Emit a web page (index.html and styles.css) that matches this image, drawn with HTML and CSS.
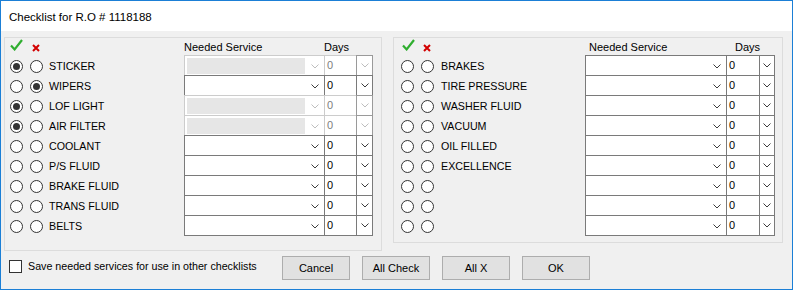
FILE: index.html
```html
<!DOCTYPE html>
<html>
<head>
<meta charset="utf-8">
<link rel="stylesheet" href="styles.css">
</head>
<body>
<div class="window">
  <div class="titlebar">Checklist for R.O # 1118188</div>
  <div class="content">
    <div class="group left">
      <div class="head">
        <span class="hc1"><svg width="13" height="12" viewBox="0 0 13 12"><path d="M1 6.5 L4.6 10.4 L12 1" fill="none" stroke="#2fae2f" stroke-width="2.2"/></svg></span>
        <span class="hc2"><svg width="8" height="8" viewBox="0 0 8 8"><path d="M1 1 L7 7 M7 1 L1 7" fill="none" stroke="#d20000" stroke-width="2"/></svg></span>
        <span class="hlbl"></span>
        <span class="hsvc">Needed Service</span>
        <span class="hdays">Days</span>
      </div>
      <div class="row"><span class="radio on"></span><span class="radio"></span><span class="lbl">STICKER</span><div class="combo dis"><div class="field"></div><span class="arr"><svg width="8" height="5" viewBox="0 0 8 5"><path d="M0.5 0.5 L4 4 L7.5 0.5" fill="none" stroke-width="1"/></svg></span></div><div class="days dis"><span class="num">0</span><span class="btn"><svg width="8" height="5" viewBox="0 0 8 5"><path d="M0.5 0.5 L4 4 L7.5 0.5" fill="none" stroke-width="1"/></svg></span></div></div>
      <div class="row"><span class="radio"></span><span class="radio on"></span><span class="lbl">WIPERS</span><div class="combo"><div class="field"></div><span class="arr"><svg width="8" height="5" viewBox="0 0 8 5"><path d="M0.5 0.5 L4 4 L7.5 0.5" fill="none" stroke-width="1"/></svg></span></div><div class="days"><span class="num">0</span><span class="btn"><svg width="8" height="5" viewBox="0 0 8 5"><path d="M0.5 0.5 L4 4 L7.5 0.5" fill="none" stroke-width="1"/></svg></span></div></div>
      <div class="row"><span class="radio on"></span><span class="radio"></span><span class="lbl">LOF LIGHT</span><div class="combo dis"><div class="field"></div><span class="arr"><svg width="8" height="5" viewBox="0 0 8 5"><path d="M0.5 0.5 L4 4 L7.5 0.5" fill="none" stroke-width="1"/></svg></span></div><div class="days dis"><span class="num">0</span><span class="btn"><svg width="8" height="5" viewBox="0 0 8 5"><path d="M0.5 0.5 L4 4 L7.5 0.5" fill="none" stroke-width="1"/></svg></span></div></div>
      <div class="row"><span class="radio on"></span><span class="radio"></span><span class="lbl">AIR FILTER</span><div class="combo dis"><div class="field"></div><span class="arr"><svg width="8" height="5" viewBox="0 0 8 5"><path d="M0.5 0.5 L4 4 L7.5 0.5" fill="none" stroke-width="1"/></svg></span></div><div class="days dis"><span class="num">0</span><span class="btn"><svg width="8" height="5" viewBox="0 0 8 5"><path d="M0.5 0.5 L4 4 L7.5 0.5" fill="none" stroke-width="1"/></svg></span></div></div>
      <div class="row"><span class="radio"></span><span class="radio"></span><span class="lbl">COOLANT</span><div class="combo"><div class="field"></div><span class="arr"><svg width="8" height="5" viewBox="0 0 8 5"><path d="M0.5 0.5 L4 4 L7.5 0.5" fill="none" stroke-width="1"/></svg></span></div><div class="days"><span class="num">0</span><span class="btn"><svg width="8" height="5" viewBox="0 0 8 5"><path d="M0.5 0.5 L4 4 L7.5 0.5" fill="none" stroke-width="1"/></svg></span></div></div>
      <div class="row"><span class="radio"></span><span class="radio"></span><span class="lbl">P/S FLUID</span><div class="combo"><div class="field"></div><span class="arr"><svg width="8" height="5" viewBox="0 0 8 5"><path d="M0.5 0.5 L4 4 L7.5 0.5" fill="none" stroke-width="1"/></svg></span></div><div class="days"><span class="num">0</span><span class="btn"><svg width="8" height="5" viewBox="0 0 8 5"><path d="M0.5 0.5 L4 4 L7.5 0.5" fill="none" stroke-width="1"/></svg></span></div></div>
      <div class="row"><span class="radio"></span><span class="radio"></span><span class="lbl">BRAKE FLUID</span><div class="combo"><div class="field"></div><span class="arr"><svg width="8" height="5" viewBox="0 0 8 5"><path d="M0.5 0.5 L4 4 L7.5 0.5" fill="none" stroke-width="1"/></svg></span></div><div class="days"><span class="num">0</span><span class="btn"><svg width="8" height="5" viewBox="0 0 8 5"><path d="M0.5 0.5 L4 4 L7.5 0.5" fill="none" stroke-width="1"/></svg></span></div></div>
      <div class="row"><span class="radio"></span><span class="radio"></span><span class="lbl">TRANS FLUID</span><div class="combo"><div class="field"></div><span class="arr"><svg width="8" height="5" viewBox="0 0 8 5"><path d="M0.5 0.5 L4 4 L7.5 0.5" fill="none" stroke-width="1"/></svg></span></div><div class="days"><span class="num">0</span><span class="btn"><svg width="8" height="5" viewBox="0 0 8 5"><path d="M0.5 0.5 L4 4 L7.5 0.5" fill="none" stroke-width="1"/></svg></span></div></div>
      <div class="row"><span class="radio"></span><span class="radio"></span><span class="lbl">BELTS</span><div class="combo"><div class="field"></div><span class="arr"><svg width="8" height="5" viewBox="0 0 8 5"><path d="M0.5 0.5 L4 4 L7.5 0.5" fill="none" stroke-width="1"/></svg></span></div><div class="days"><span class="num">0</span><span class="btn"><svg width="8" height="5" viewBox="0 0 8 5"><path d="M0.5 0.5 L4 4 L7.5 0.5" fill="none" stroke-width="1"/></svg></span></div></div>
    </div>

    <div class="group right">
      <div class="head">
        <span class="hc1"><svg width="13" height="12" viewBox="0 0 13 12"><path d="M1 6.5 L4.6 10.4 L12 1" fill="none" stroke="#2fae2f" stroke-width="2.2"/></svg></span>
        <span class="hc2"><svg width="8" height="8" viewBox="0 0 8 8"><path d="M1 1 L7 7 M7 1 L1 7" fill="none" stroke="#d20000" stroke-width="2"/></svg></span>
        <span class="hlbl"></span>
        <span class="hsvc">Needed Service</span>
        <span class="hdays">Days</span>
      </div>
      <div class="row"><span class="radio"></span><span class="radio"></span><span class="lbl">BRAKES</span><div class="combo"><div class="field"></div><span class="arr"><svg width="8" height="5" viewBox="0 0 8 5"><path d="M0.5 0.5 L4 4 L7.5 0.5" fill="none" stroke-width="1"/></svg></span></div><div class="days"><span class="num">0</span><span class="btn"><svg width="8" height="5" viewBox="0 0 8 5"><path d="M0.5 0.5 L4 4 L7.5 0.5" fill="none" stroke-width="1"/></svg></span></div></div>
      <div class="row"><span class="radio"></span><span class="radio"></span><span class="lbl">TIRE PRESSURE</span><div class="combo"><div class="field"></div><span class="arr"><svg width="8" height="5" viewBox="0 0 8 5"><path d="M0.5 0.5 L4 4 L7.5 0.5" fill="none" stroke-width="1"/></svg></span></div><div class="days"><span class="num">0</span><span class="btn"><svg width="8" height="5" viewBox="0 0 8 5"><path d="M0.5 0.5 L4 4 L7.5 0.5" fill="none" stroke-width="1"/></svg></span></div></div>
      <div class="row"><span class="radio"></span><span class="radio"></span><span class="lbl">WASHER FLUID</span><div class="combo"><div class="field"></div><span class="arr"><svg width="8" height="5" viewBox="0 0 8 5"><path d="M0.5 0.5 L4 4 L7.5 0.5" fill="none" stroke-width="1"/></svg></span></div><div class="days"><span class="num">0</span><span class="btn"><svg width="8" height="5" viewBox="0 0 8 5"><path d="M0.5 0.5 L4 4 L7.5 0.5" fill="none" stroke-width="1"/></svg></span></div></div>
      <div class="row"><span class="radio"></span><span class="radio"></span><span class="lbl">VACUUM</span><div class="combo"><div class="field"></div><span class="arr"><svg width="8" height="5" viewBox="0 0 8 5"><path d="M0.5 0.5 L4 4 L7.5 0.5" fill="none" stroke-width="1"/></svg></span></div><div class="days"><span class="num">0</span><span class="btn"><svg width="8" height="5" viewBox="0 0 8 5"><path d="M0.5 0.5 L4 4 L7.5 0.5" fill="none" stroke-width="1"/></svg></span></div></div>
      <div class="row"><span class="radio"></span><span class="radio"></span><span class="lbl">OIL FILLED</span><div class="combo"><div class="field"></div><span class="arr"><svg width="8" height="5" viewBox="0 0 8 5"><path d="M0.5 0.5 L4 4 L7.5 0.5" fill="none" stroke-width="1"/></svg></span></div><div class="days"><span class="num">0</span><span class="btn"><svg width="8" height="5" viewBox="0 0 8 5"><path d="M0.5 0.5 L4 4 L7.5 0.5" fill="none" stroke-width="1"/></svg></span></div></div>
      <div class="row"><span class="radio"></span><span class="radio"></span><span class="lbl">EXCELLENCE</span><div class="combo"><div class="field"></div><span class="arr"><svg width="8" height="5" viewBox="0 0 8 5"><path d="M0.5 0.5 L4 4 L7.5 0.5" fill="none" stroke-width="1"/></svg></span></div><div class="days"><span class="num">0</span><span class="btn"><svg width="8" height="5" viewBox="0 0 8 5"><path d="M0.5 0.5 L4 4 L7.5 0.5" fill="none" stroke-width="1"/></svg></span></div></div>
      <div class="row"><span class="radio"></span><span class="radio"></span><span class="lbl"></span><div class="combo"><div class="field"></div><span class="arr"><svg width="8" height="5" viewBox="0 0 8 5"><path d="M0.5 0.5 L4 4 L7.5 0.5" fill="none" stroke-width="1"/></svg></span></div><div class="days"><span class="num">0</span><span class="btn"><svg width="8" height="5" viewBox="0 0 8 5"><path d="M0.5 0.5 L4 4 L7.5 0.5" fill="none" stroke-width="1"/></svg></span></div></div>
      <div class="row"><span class="radio"></span><span class="radio"></span><span class="lbl"></span><div class="combo"><div class="field"></div><span class="arr"><svg width="8" height="5" viewBox="0 0 8 5"><path d="M0.5 0.5 L4 4 L7.5 0.5" fill="none" stroke-width="1"/></svg></span></div><div class="days"><span class="num">0</span><span class="btn"><svg width="8" height="5" viewBox="0 0 8 5"><path d="M0.5 0.5 L4 4 L7.5 0.5" fill="none" stroke-width="1"/></svg></span></div></div>
      <div class="row"><span class="radio"></span><span class="radio"></span><span class="lbl"></span><div class="combo"><div class="field"></div><span class="arr"><svg width="8" height="5" viewBox="0 0 8 5"><path d="M0.5 0.5 L4 4 L7.5 0.5" fill="none" stroke-width="1"/></svg></span></div><div class="days"><span class="num">0</span><span class="btn"><svg width="8" height="5" viewBox="0 0 8 5"><path d="M0.5 0.5 L4 4 L7.5 0.5" fill="none" stroke-width="1"/></svg></span></div></div>
    </div>
  </div>

  <div class="bottom">
    <label class="save"><span class="check"></span><span class="save-text">Save needed services for use in other checklists</span></label>
    <div class="buttons">
      <button class="btn-win">Cancel</button>
      <button class="btn-win">All Check</button>
      <button class="btn-win">All X</button>
      <button class="btn-win">OK</button>
    </div>
  </div>
</div>
</body>
</html>
```

FILE: styles.css
```css
html, body {
  margin: 0;
  padding: 0;
  background: #ffffff;
}

.window {
  width: 793px;
  height: 290px;
  box-sizing: border-box;
  border: 1px solid #1b7fd6;
  background: #f0f0f0;
  font-family: "Liberation Sans", Arial, sans-serif;
  font-size: 11px;
  color: #000;
  display: flex;
  flex-direction: column;
  overflow: hidden;
}

.titlebar {
  flex: none;
  height: 30px;
  background: #ffffff;
  display: flex;
  align-items: center;
  padding-left: 8px;
  padding-top: 1px;
  box-sizing: border-box;
  font-size: 11.5px;
  color: #000;
}

.content {
  flex: none;
  display: flex;
  align-items: flex-start;
  gap: 11px;
  padding: 6px 0 0 3px;
}

.group {
  box-sizing: border-box;
  border: 1px solid #dcdcdc;
}

.group.left {
  width: 378px;
  padding: 0 0 15px 5px;
}

.group.right {
  width: 390px;
  padding: 0 0 7px 7px;
}

.head {
  height: 17px;
  display: flex;
  align-items: center;
}

.head svg {
  display: block;
}

.hc1 {
  width: 20px;
  flex: none;
  margin-top: -4px;
}

.hc2 {
  flex: none;
  margin-top: 3px;
}

.left .hc2 { width: 18px; padding-left: 2px; box-sizing: border-box; }
.right .hc1 { padding-left: 1px; box-sizing: border-box; }
.right .hc2 { width: 20px; padding-left: 2px; box-sizing: border-box; }

.hlbl { flex: none; }
.left .hlbl { width: 135px; }
.right .hlbl { width: 144px; }

.hsvc { flex: none; }
.left .hsvc { width: 140px; padding-left: 1px; }
.right .hsvc { width: 136px; padding-left: 4px; }

.right .hdays { padding-left: 10px; }

.row {
  height: 20px;
  display: flex;
  align-items: flex-start;
}

.radio {
  flex: none;
  width: 13px;
  height: 13px;
  box-sizing: border-box;
  border: 1px solid #333333;
  border-radius: 50%;
  background: #ffffff;
  margin-top: 5px;
  margin-right: 7px;
  display: flex;
  align-items: center;
  justify-content: center;
}

.left .radio + .radio { margin-right: 6px; }
.right .radio + .radio { margin-right: 7px; }

.radio.on::after {
  content: "";
  width: 7px;
  height: 7px;
  border-radius: 50%;
  background: #333333;
}

.lbl {
  flex: none;
  line-height: 22px;
  font-size: 10.7px;
  white-space: nowrap;
}

.left .lbl { width: 135px; }
.right .lbl { width: 144px; }

.combo {
  flex: none;
  width: 141px;
  height: 21px;
  box-sizing: border-box;
  border: 1px solid #7a7a7a;
  background: #ffffff;
  display: flex;
  padding: 2px 0 1px 2px;
}

.right .combo { width: 142px; }

.combo .field {
  flex: 1;
}

.combo .arr {
  width: 19px;
  flex: none;
  display: flex;
  align-items: center;
  justify-content: center;
}

.combo svg path,
.days svg path {
  stroke: #3c3c3c;
}

.combo.dis {
  border-color: #cccccc;
}

.combo.dis .field {
  background: #e6e6e6;
}

.combo.dis svg path,
.days.dis svg path {
  stroke: #bdbdbd;
}

.days {
  flex: none;
  width: 49px;
  height: 21px;
  margin-left: -1px;
  display: flex;
  box-sizing: border-box;
}

.days .num {
  flex: 1;
  box-sizing: border-box;
  border: 1px solid #7a7a7a;
  border-right: none;
  background: #ffffff;
  padding-left: 2px;
  line-height: 19px;
  color: #000;
}

.days .btn {
  flex: none;
  width: 17px;
  box-sizing: border-box;
  border: 1px solid #7a7a7a;
  background: #ffffff;
  display: flex;
  align-items: center;
  justify-content: center;
}

.right .days .btn { width: 16px; }

.days.dis .num {
  border-color: #cccccc;
  color: #7d7d7d;
}

.days.dis .btn {
  border-color: #9a9a9a;
}

.bottom {
  flex: none;
  display: flex;
  align-items: flex-start;
  margin-top: 5px;
  padding-left: 8px;
}

.save {
  flex: none;
  width: 273px;
  display: flex;
  align-items: center;
  gap: 6px;
  margin-top: 4px;
  line-height: 13px;
  white-space: nowrap;
}

.save-text {
  font-size: 10.7px;
}

.check {
  flex: none;
  width: 13px;
  height: 13px;
  box-sizing: border-box;
  border: 1px solid #333333;
  background: #ffffff;
}

.buttons {
  display: flex;
  gap: 12px;
}

.btn-win {
  width: 68px;
  height: 24px;
  box-sizing: border-box;
  border: 1px solid #adadad;
  background: #e1e1e1;
  font-family: "Liberation Sans", Arial, sans-serif;
  font-size: 11px;
  color: #000;
  padding: 0;
  margin: 0;
}
```
